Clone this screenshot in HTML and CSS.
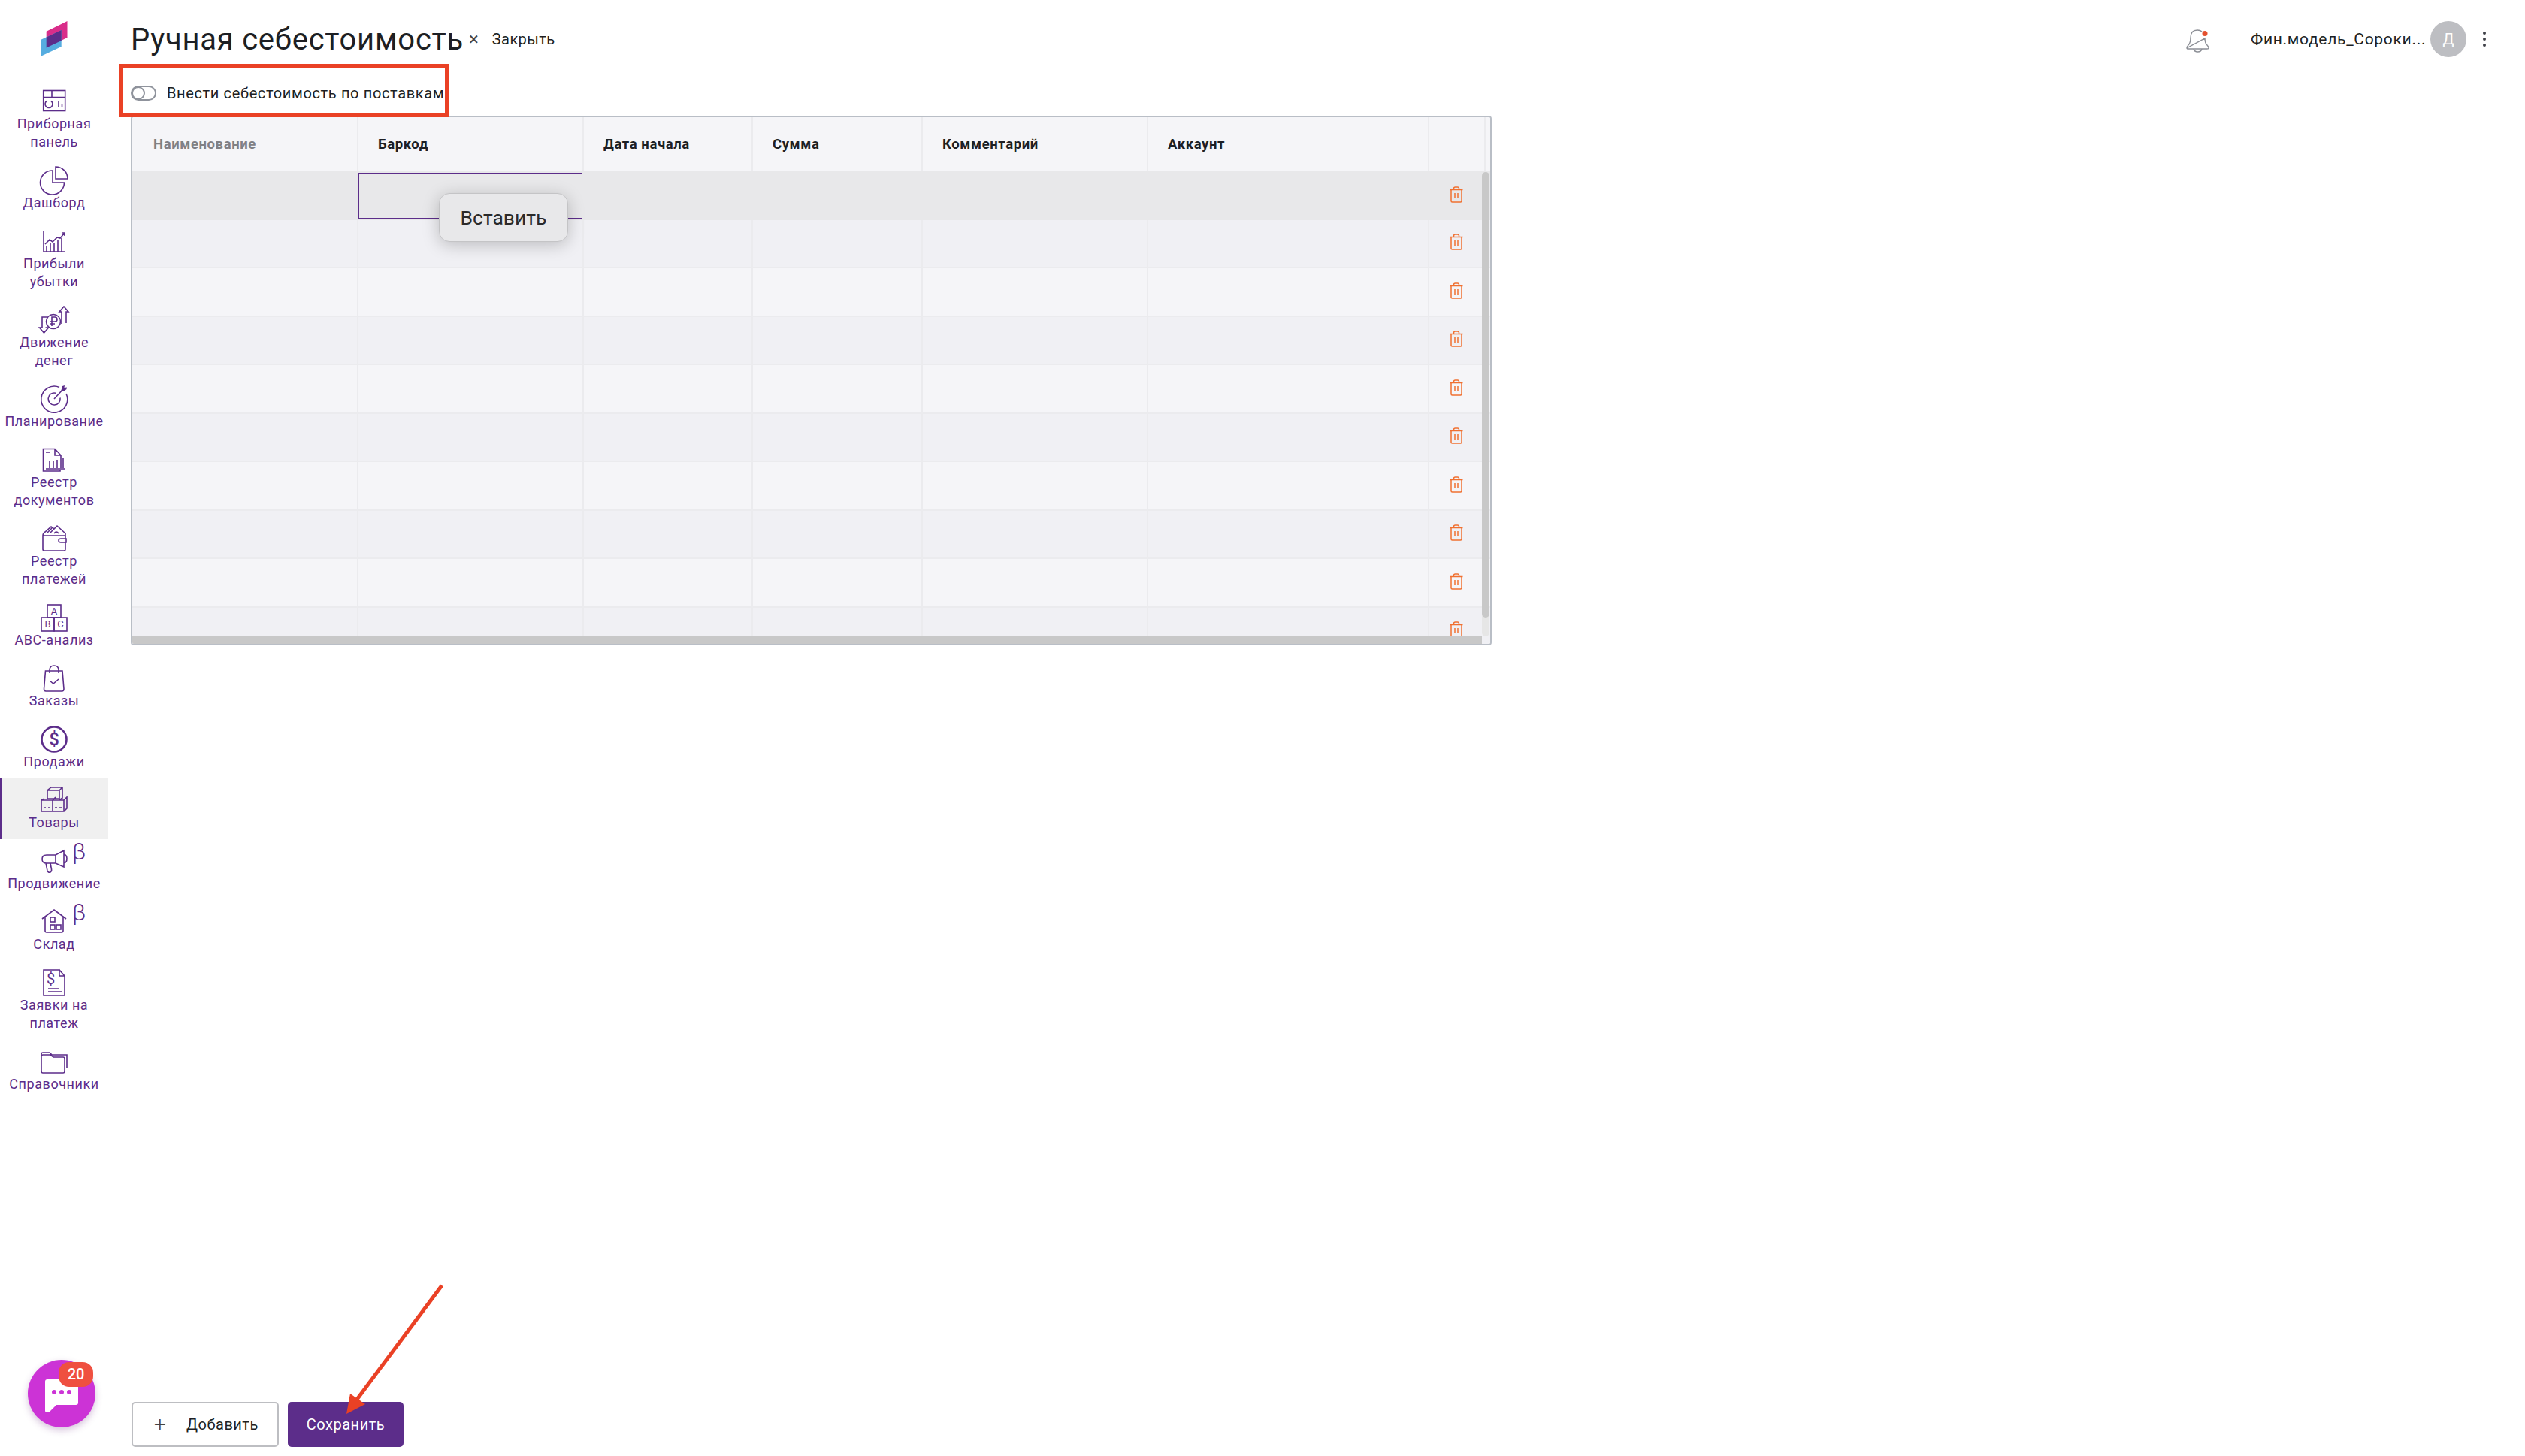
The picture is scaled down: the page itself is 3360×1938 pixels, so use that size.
FILE: index.html
```html
<!DOCTYPE html>
<html>
<head>
  <title>Ручная себестоимость</title>
  <meta charset="UTF-8">
  <link rel="stylesheet" href="styles.css">
</head>
<body>
  <svg class="defs" width="0" height="0">
    <symbol id="trash" viewBox="0 0 18 22">
      <path d="M0.5 4.5H17.5M2 4.5V19.5Q2 21 3.5 21H14.5Q16 21 16 19.5V4.5M5.5 4.5V3Q5.5 1 7.5 1H10.5Q12.5 1 12.5 3V4.5M7 9V16M11 9V16" fill="none" stroke="#f07030" stroke-width="1.5"/>
    </symbol>
  </svg>

  <div class="app">
    <aside class="sidebar">
      <div class="logo">
        <svg width="60" height="60" viewBox="40 20 60 60">
          <polygon points="61.7,41.7 89.5,28 89.5,50 61.7,63.5" fill="#d92d8a"/>
          <polygon points="54,53 81.7,40 81.7,62 54,75" fill="#56ade0"/>
          <polygon points="61.7,49.5 81.7,40 81.7,54 61.7,63.5" fill="#5c2d8a"/>
        </svg>
      </div>
      <nav class="nav">
        <a class="nav-item">
          <svg class="nav-icon" viewBox="0 0 48 37"><rect x="9.7" y="4.5" width="29" height="27"/><path d="M9.7 13.5H38.7M21 4.5V13.5M14 18.5A5 5 0 1 0 20 18.5M30 18V27M34.5 22V27"/></svg>
          <span>Приборная панель</span>
        </a>
        <a class="nav-item">
          <svg class="nav-icon" viewBox="0 0 48 37"><path d="M22 6A16 16 0 1 0 37.5 22H22ZM26 1A16 16 0 0 1 42 17H26Z"/></svg>
          <span>Дашборд</span>
        </a>
        <a class="nav-item">
          <svg class="nav-icon" viewBox="0 0 48 37"><path d="M10 5V33H39M14 33V25M19 33V22M24 33V22M29 33V18M34 33V15M12 23L18 17L22 20L28 14L32 15L38 8M34 8H38V12"/></svg>
          <span>Прибыли убытки</span>
        </a>
        <a class="nav-item">
          <svg class="nav-icon" viewBox="0 0 48 37"><circle cx="23" cy="21" r="9.5"/><path d="M21 27V15H25Q28 15 28 18Q28 21 25 21H19M19 24H25M34 24V8H31L37 1L43 8H40V23M14 15H8V29H4.5L10.5 36L16.5 29H12.5"/></svg>
          <span>Движение денег</span>
        </a>
        <a class="nav-item">
          <svg class="nav-icon" viewBox="0 0 48 37"><path d="M31 3.5A17.5 17.5 0 1 0 40 12M26 11.2A8 8 0 1 0 32 17.5M24 19L36 6"/><path class="solid" d="M33 9L35 2L38 1L37.5 4L41 3.5L40.5 6L38 8Z"/></svg>
          <span>Планирование</span>
        </a>
        <a class="nav-item">
          <svg class="nav-icon" viewBox="0 0 48 37"><path d="M33 16V13L25 4.5H9.5V34H32V32M25 4.5V13H33M13 9H19M18 30V20M23 30V21M28 30V19M33 30V15M36 30V17M13 31H39"/></svg>
          <span>Реестр документов</span>
        </a>
        <a class="nav-item">
          <svg class="nav-icon" viewBox="0 0 48 37"><path d="M39 23V33Q39 35 37 35H11Q9 35 9 33V15Q9 12 12 10L20 3L24 6L28 2L39 12V19M9 15H39M14 12L21 5M18 12L24 6M30 12Q27 8 24 12M40 19H33Q30 19 30 21.5Q30 24 33 24H40Z"/></svg>
          <span>Реестр платежей</span>
        </a>
        <a class="nav-item">
          <svg class="nav-icon" viewBox="0 0 48 37">
            <rect x="15" y="2" width="18" height="17"/><rect x="7" y="19" width="17" height="18"/><rect x="24" y="19" width="17" height="18"/>
            <text x="24" y="15" class="abc">A</text><text x="15.5" y="32" class="abc">B</text><text x="32.5" y="32" class="abc">C</text>
          </svg>
          <span>ABC-анализ</span>
        </a>
        <a class="nav-item">
          <svg class="nav-icon" viewBox="0 0 48 37"><path d="M12.5 9H35L37 33Q37 36 34.5 36H13Q10.5 36 10.5 33ZM18 12V8Q18 2 24 2Q30 2 30 8V12M18 22L23 26L30 20"/></svg>
          <span>Заказы</span>
        </a>
        <a class="nav-item">
          <svg class="nav-icon" viewBox="0 0 48 37"><circle class="thick" cx="24" cy="19" r="16.5"/><text x="24" y="27" class="dollar">$</text></svg>
          <span>Продажи</span>
        </a>
        <a class="nav-item active">
          <svg class="nav-icon" viewBox="0 0 48 37"><path d="M15 17V6L20 2H35V16L31 19V17M15 6H31V17H15M31 6L35 2M7 19L11 17M7 19V34H22V19ZM22 19V34H37V19ZM22 19L26 15M37 19L41 15V30L37 34M10 29H13M16 29H19M25 29H28M31 29H34"/></svg>
          <span>Товары</span>
        </a>
        <a class="nav-item beta">
          <svg class="nav-icon" viewBox="0 0 48 37"><path d="M14 11H26L37 5V27L26 22H14Q8 22 8 16.5Q8 11 14 11ZM26 11V22M37 10Q41 11 41 16Q41 21 37 22M13 22L15 32Q16 35 19 34Q21 33 20.5 30L19 22"/></svg>
          <span>Продвижение</span>
        </a>
        <a class="nav-item beta">
          <svg class="nav-icon" viewBox="0 0 48 37"><path d="M8 15L24 3L40 15M12 13V31Q12 33 14 33H34Q36 33 36 31V13"/><rect x="19" y="13" width="6" height="6"/><rect x="19" y="23" width="6" height="6"/><rect x="27" y="23" width="6" height="6"/></svg>
          <span>Склад</span>
        </a>
        <a class="nav-item">
          <svg class="nav-icon" viewBox="0 0 48 37"><path d="M31 2H10V36H38V10L31 2V10H38M16 27H30M16 31H34"/><text x="19.5" y="21" class="dollar small">$</text></svg>
          <span>Заявки на платеж</span>
        </a>
        <a class="nav-item">
          <svg class="nav-icon" viewBox="0 0 48 37"><path d="M7 32V12Q7 10 9 10H19L23 13H36Q38 13 38 15V32Q38 34 36 34H9Q7 34 7 32ZM7 11V9Q7 7 9 7H18L21 10H41V28"/></svg>
          <span>Справочники</span>
        </a>
      </nav>
    </aside>

    <main class="main">
      <header class="topbar">
        <h1 class="title">Ручная себестоимость</h1>
        <span class="close-x">×</span>
        <span class="close-text">Закрыть</span>
        <div class="top-right">
          <svg class="bell" width="31" height="32" viewBox="0 0 31 32">
            <path d="M1 26Q1 24 3 22Q6 19 6 12Q6 2 15 2Q19 2 21 4M25 13Q25 19 28 22Q30 24 30 26Q30 27 28 27H3Q1 27 1 26ZM10 27Q11 31 15.5 31Q20 31 21 27" fill="none" stroke="#8c8f96" stroke-width="1.4"/>
            <circle cx="25" cy="6.5" r="3.5" fill="#e4502e"/>
          </svg>
          <span class="org">Фин.модель_Сороки...</span>
          <span class="avatar">Д</span>
          <span class="dots"><i></i><i></i><i></i></span>
        </div>
      </header>

      <div class="toggle-row">
        <span class="toggle"><i></i></span>
        <span class="toggle-label">Внести себестоимость по поставкам</span>
      </div>

      <div class="table">
        <div class="row head">
          <div class="cell muted">Наименование</div><div class="cell">Баркод</div><div class="cell">Дата начала</div><div class="cell">Сумма</div><div class="cell">Комментарий</div><div class="cell">Аккаунт</div><div class="cell"></div><div class="cell"></div>
        </div>
        <div class="row hover"><div class="cell"></div><div class="cell selected"></div><div class="cell"></div><div class="cell"></div><div class="cell"></div><div class="cell"></div><div class="cell del"><svg width="18" height="22"><use href="#trash"/></svg></div></div>
        <div class="row even"><div class="cell"></div><div class="cell"></div><div class="cell"></div><div class="cell"></div><div class="cell"></div><div class="cell"></div><div class="cell del"><svg width="18" height="22"><use href="#trash"/></svg></div></div>
        <div class="row"><div class="cell"></div><div class="cell"></div><div class="cell"></div><div class="cell"></div><div class="cell"></div><div class="cell"></div><div class="cell del"><svg width="18" height="22"><use href="#trash"/></svg></div></div>
        <div class="row even"><div class="cell"></div><div class="cell"></div><div class="cell"></div><div class="cell"></div><div class="cell"></div><div class="cell"></div><div class="cell del"><svg width="18" height="22"><use href="#trash"/></svg></div></div>
        <div class="row"><div class="cell"></div><div class="cell"></div><div class="cell"></div><div class="cell"></div><div class="cell"></div><div class="cell"></div><div class="cell del"><svg width="18" height="22"><use href="#trash"/></svg></div></div>
        <div class="row even"><div class="cell"></div><div class="cell"></div><div class="cell"></div><div class="cell"></div><div class="cell"></div><div class="cell"></div><div class="cell del"><svg width="18" height="22"><use href="#trash"/></svg></div></div>
        <div class="row"><div class="cell"></div><div class="cell"></div><div class="cell"></div><div class="cell"></div><div class="cell"></div><div class="cell"></div><div class="cell del"><svg width="18" height="22"><use href="#trash"/></svg></div></div>
        <div class="row even"><div class="cell"></div><div class="cell"></div><div class="cell"></div><div class="cell"></div><div class="cell"></div><div class="cell"></div><div class="cell del"><svg width="18" height="22"><use href="#trash"/></svg></div></div>
        <div class="row"><div class="cell"></div><div class="cell"></div><div class="cell"></div><div class="cell"></div><div class="cell"></div><div class="cell"></div><div class="cell del"><svg width="18" height="22"><use href="#trash"/></svg></div></div>
        <div class="row even"><div class="cell"></div><div class="cell"></div><div class="cell"></div><div class="cell"></div><div class="cell"></div><div class="cell"></div><div class="cell del"><svg width="18" height="22"><use href="#trash"/></svg></div></div>
        <div class="scroll-v"><i></i></div>
        <div class="scroll-h"></div>
      </div>

      <footer class="footer">
        <button class="btn btn-add"><span class="plus">+</span>Добавить</button>
        <button class="btn btn-save">Сохранить</button>
      </footer>
    </main>
  </div>

  <div class="paste-menu">Вставить</div>

  <div class="chat">
    <svg width="90" height="90" viewBox="0 0 90 90">
      <path d="M26 26H64Q67 26 67 29V57Q67 60 64 60H38L28 70H25Q23 70 23 68V29Q23 26 26 26Z" fill="#fff"/>
      <circle cx="35" cy="43" r="3" fill="#cc33d6"/><circle cx="45" cy="43" r="3" fill="#cc33d6"/><circle cx="55" cy="43" r="3" fill="#cc33d6"/>
    </svg>
    <span class="chat-badge">20</span>
  </div>

  <div class="mark-box"></div>
  <svg class="mark-arrow" width="140" height="185" viewBox="455 1705 140 185">
    <line x1="588" y1="1711" x2="474" y2="1864" stroke="#ea4125" stroke-width="5"/>
    <polygon points="461,1882 466,1855 486,1869" fill="#ea4125"/>
  </svg>
</body>
</html>
```
FILE: styles.css
```css
* { box-sizing: border-box; }
body { margin: 0; font-family: Roboto, "Noto Sans", sans-serif; color: #1d1f24; background: #fff; overflow: hidden; }
.defs { position: absolute; }
.app { display: flex; height: 100vh; }

/* sidebar */
.sidebar { width: 144px; flex: none; }
.logo { height: 106px; padding: 20px 0 0 40px; }
.logo svg { display: block; }
.nav-item { position: relative; display: flex; flex-direction: column; align-items: center; padding: 10px 0; color: #5c2d8a; font-size: 18px; line-height: 24px; letter-spacing: 0.55px; text-align: center; }
.nav-item span { display: block; width: 136px; }
.nav-icon { width: 48px; height: 37px; fill: none; stroke: #5c2d8a; stroke-width: 1.6; overflow: visible; }
.nav-icon .solid { fill: #5c2d8a; stroke: none; }
.nav-icon .thick { stroke-width: 2.6; }
.nav-icon text { stroke: none; fill: #5c2d8a; text-anchor: middle; font-family: Roboto, sans-serif; }
.nav-icon .abc { font-size: 13px; letter-spacing: 0; }
.nav-icon .dollar { font-size: 24px; font-weight: 500; letter-spacing: 0; }
.nav-icon .dollar.small { font-size: 20px; font-weight: 400; }
.nav-item.active { background: #f0f0f0; border-left: 3px solid #5c2d8a; padding-left: 0; }
.nav-item.active span { margin-left: -3px; }
.nav-item.active .nav-icon { margin-left: -3px; }
.nav-item.beta::after { content: "β"; position: absolute; left: 96px; top: 0; font-size: 31px; line-height: 34px; font-weight: 300; }

/* main column */
.main { flex: 1; display: flex; flex-direction: column; padding-left: 30px; min-width: 0; }
.topbar { display: flex; align-items: center; height: 48px; margin-top: 28px; padding-right: 52px; }
.title { margin: 2px 0 0; font-size: 40px; line-height: 48px; font-weight: 400; letter-spacing: 0.75px; }
.close-x { margin-left: 7px; font-size: 24px; color: #444; }
.close-text { margin-left: 18px; font-size: 20px; letter-spacing: 0.4px; }
.top-right { margin-left: auto; display: flex; align-items: center; }
.bell { margin-right: 55px; margin-top: 3px; }
.org { font-size: 21px; letter-spacing: 0.7px; width: 225px; white-space: nowrap; }
.avatar { width: 48px; height: 48px; margin-left: 14px; border-radius: 50%; background: #bdbec2; color: #fff; font-size: 20px; line-height: 48px; text-align: center; }
.dots { display: flex; flex-direction: column; gap: 4px; margin-left: 22px; }
.dots i { width: 4px; height: 4px; border-radius: 50%; background: #3f4148; }

.toggle-row { display: flex; align-items: flex-end; height: 78px; padding-bottom: 20px; flex: none; }
.toggle { width: 34px; height: 20px; border: 2px solid #8f939c; border-radius: 10px; display: block; }
.toggle i { display: block; width: 18px; height: 18px; margin: -1px; border: 2px solid #8f939c; border-radius: 50%; background: #fff; }
.toggle-label { margin-left: 14px; font-size: 20px; line-height: 20px; letter-spacing: 0.63px; }

/* table */
.table { position: relative; width: 1811px; height: 705px; flex: none; border: 2px solid #b9bec6; border-radius: 4px; overflow: hidden; background: #fff; }
.row { display: grid; grid-template-columns: 299px 300px 225px 226px 300px 374px 75px 8px; height: 64.5px; background: #f5f5f8; border-bottom: 2px solid #ebebee; }
.row.even { background: #f0f0f4; }
.row.hover { background: #e8e8ea; border-bottom-color: #e8e8ea; }
.row.head { height: 72px; border-bottom: 0; }
.cell { border-left: 2px solid #ebebee; padding-left: 26px; }
.cell:first-child { border-left: 0; padding-left: 28px; }
.head .cell { font-size: 18.5px; line-height: 72px; font-weight: 700; letter-spacing: 0.6px; }
.head .muted { color: #808085; }
.hover .cell { border-left-color: #e8e8ea; }
.cell.selected { border: 2px solid #5c2d8a; margin: 2px -1px 0 1px; height: 62px; }
.cell.del { display: flex; align-items: center; padding: 0 0 3px 27px; }
.scroll-v { position: absolute; right: 1px; top: 73px; bottom: 10px; width: 10px; border-radius: 5px; background: #e6e6e6; }
.scroll-v i { display: block; height: 593px; border-radius: 5px; background: #c8c8c8; }
.scroll-h { position: absolute; left: 0; right: 11px; bottom: 0; height: 10px; background: #c8c8c8; }

/* footer */
.footer { display: flex; gap: 12px; margin-top: auto; margin-bottom: 12px; margin-left: 1px; }
.btn { height: 60px; border-radius: 5px; font-family: inherit; font-size: 20px; letter-spacing: 0.5px; }
.btn-add { display: flex; align-items: center; width: 196px; padding: 0 0 0 28px; background: #fff; border: 2px solid #bdbec2; color: #1d1f24; }
.plus { width: 43px; font-size: 28px; font-weight: 300; color: #444; text-align: left; }
.btn-save { width: 154px; background: #5c2d8a; border: 0; color: #fff; }

/* overlays */
.paste-menu { position: absolute; left: 584px; top: 257px; width: 172px; height: 65px; background: #e8e8ea; border: 1px solid #c4c4c6; border-radius: 14px; box-shadow: 0 4px 22px rgba(0, 0, 0, 0.22); font-size: 26.5px; line-height: 63px; text-align: center; color: #2a2a2a; }
.chat { position: absolute; left: 37px; top: 1810px; width: 90px; height: 90px; border-radius: 50%; background: #cc33d6; box-shadow: 0 4px 10px rgba(120, 60, 140, 0.3); }
.chat svg { display: block; }
.chat-badge { position: absolute; left: 41px; top: 3px; width: 46px; height: 33px; border-radius: 14px; background: #ef5040; color: #fff; font-size: 20px; font-weight: 500; line-height: 33px; text-align: center; }
.mark-box { position: absolute; left: 159px; top: 85px; width: 438px; height: 71px; border: 5px solid #ea4125; }
.mark-arrow { position: absolute; left: 455px; top: 1705px; }
```
